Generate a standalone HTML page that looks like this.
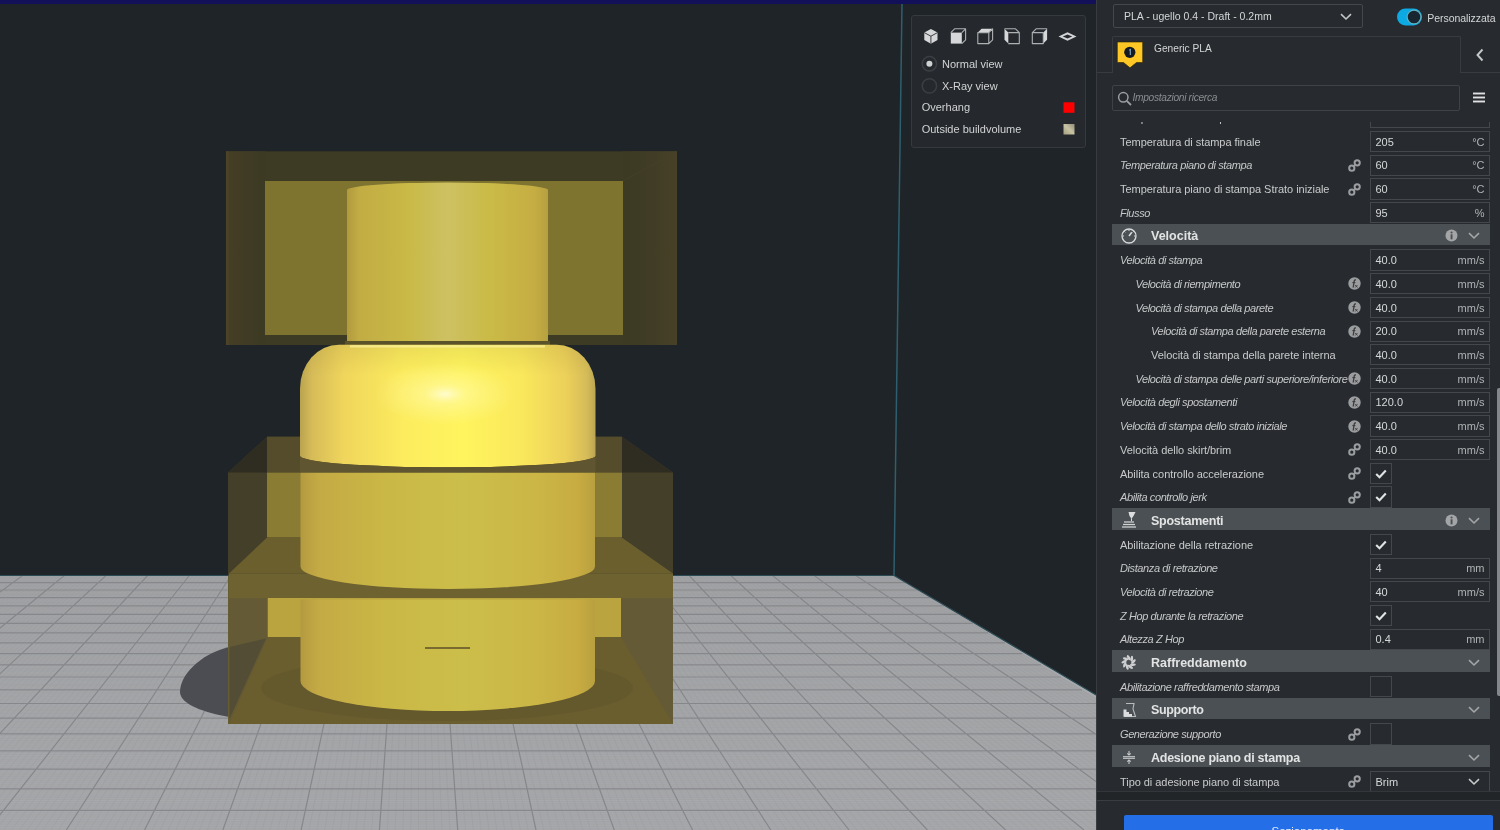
<!DOCTYPE html>
<html><head><meta charset="utf-8">
<style>
html,body{margin:0;padding:0;width:1500px;height:830px;overflow:hidden;background:#1f2327;font-family:"Liberation Sans",sans-serif;}
#wrap{position:absolute;left:0;top:0;width:1500px;height:830px;will-change:transform}

#panel{position:absolute;left:1096px;top:0;width:404px;height:830px;background:#272b2f;}
#pborder{position:absolute;left:1096px;top:0;width:1px;height:830px;background:#383c40}
.abs{position:absolute}
.lbl{position:absolute;height:24px;line-height:24px;font-size:11px;color:#c9cacb;white-space:nowrap;letter-spacing:-0.05px}
.lbl.it{font-style:italic;letter-spacing:-0.4px;color:#c6c7c8}
.inp{position:absolute;left:1370px;width:119.8px;height:21.3px;box-sizing:border-box;border:1px solid #44484c;background:#272b2f}
.chk{position:absolute;left:1370px;width:21.5px;height:21.3px;box-sizing:border-box;border:1px solid #44484c;background:#272b2f}
.val{position:absolute;left:1375.5px;height:24px;line-height:24px;font-size:11px;color:#d6d7d8;white-space:nowrap}
.unit{position:absolute;right:15.5px;height:24px;line-height:24px;font-size:11px;color:#b0b2b4;white-space:nowrap}
.cat{position:absolute;left:1112px;width:378px;height:21.6px;background:#4b5054}
.cattxt{position:absolute;left:1151px;height:24px;line-height:24px;font-size:12.5px;font-weight:bold;color:#e2e3e3;white-space:nowrap;letter-spacing:0px}
#list{position:absolute;left:0;top:0;width:1500px;height:830px;clip-path:polygon(1097px 122px,1500px 122px,1500px 791px,1097px 791px)}


.ovt{position:absolute;height:24px;line-height:24px;font-size:11px;color:#d2d3d4;white-space:nowrap}

</style></head><body><div id="wrap">

<svg width="1097" height="830" viewBox="0 0 1097 830" style="position:absolute;left:0;top:0">
<rect width="1097" height="830" fill="#1e2427"/>
<rect width="1097" height="4" fill="#13105a"/>
<polygon points="0,575.5 894,575.5 1097,695.5 1097,830 0,830" fill="#a8a9ac"/>
<clipPath id="floorClip"><polygon points="0,575.5 894,575.5 1097,695.5 1097,830 0,830"/></clipPath>
<g clip-path="url(#floorClip)">
<path d="M-473.08 575.5L-1256.70 830M-468.92 575.5L-1248.87 830M-464.75 575.5L-1241.04 830M-460.59 575.5L-1233.22 830M-456.42 575.5L-1225.39 830M-452.25 575.5L-1217.56 830M-448.09 575.5L-1209.73 830M-443.92 575.5L-1201.90 830M-439.76 575.5L-1194.07 830M-431.42 575.5L-1178.42 830M-427.26 575.5L-1170.59 830M-423.09 575.5L-1162.76 830M-418.93 575.5L-1154.93 830M-414.76 575.5L-1147.10 830M-410.59 575.5L-1139.28 830M-406.43 575.5L-1131.45 830M-402.26 575.5L-1123.62 830M-398.10 575.5L-1115.79 830M-389.76 575.5L-1100.13 830M-385.60 575.5L-1092.31 830M-381.43 575.5L-1084.48 830M-377.27 575.5L-1076.65 830M-373.10 575.5L-1068.82 830M-368.93 575.5L-1060.99 830M-364.77 575.5L-1053.16 830M-360.60 575.5L-1045.34 830M-356.44 575.5L-1037.51 830M-348.10 575.5L-1021.85 830M-343.94 575.5L-1014.02 830M-339.77 575.5L-1006.19 830M-335.61 575.5L-998.37 830M-331.44 575.5L-990.54 830M-327.27 575.5L-982.71 830M-323.11 575.5L-974.88 830M-318.94 575.5L-967.05 830M-314.78 575.5L-959.22 830M-306.44 575.5L-943.57 830M-302.28 575.5L-935.74 830M-298.11 575.5L-927.91 830M-293.95 575.5L-920.08 830M-289.78 575.5L-912.25 830M-285.61 575.5L-904.43 830M-281.45 575.5L-896.60 830M-277.28 575.5L-888.77 830M-273.12 575.5L-880.94 830M-264.78 575.5L-865.28 830M-260.62 575.5L-857.46 830M-256.45 575.5L-849.63 830M-252.29 575.5L-841.80 830M-248.12 575.5L-833.97 830M-243.95 575.5L-826.14 830M-239.79 575.5L-818.31 830M-235.62 575.5L-810.49 830M-231.46 575.5L-802.66 830M-223.12 575.5L-787.00 830M-218.96 575.5L-779.17 830M-214.79 575.5L-771.34 830M-210.63 575.5L-763.52 830M-206.46 575.5L-755.69 830M-202.29 575.5L-747.86 830M-198.13 575.5L-740.03 830M-193.96 575.5L-732.20 830M-189.80 575.5L-724.37 830M-181.46 575.5L-708.72 830M-177.30 575.5L-700.89 830M-173.13 575.5L-693.06 830M-168.97 575.5L-685.23 830M-164.80 575.5L-677.40 830M-160.63 575.5L-669.58 830M-156.47 575.5L-661.75 830M-152.30 575.5L-653.92 830M-148.14 575.5L-646.09 830M-139.80 575.5L-630.43 830M-135.64 575.5L-622.61 830M-131.47 575.5L-614.78 830M-127.31 575.5L-606.95 830M-123.14 575.5L-599.12 830M-118.97 575.5L-591.29 830M-114.81 575.5L-583.46 830M-110.64 575.5L-575.64 830M-106.48 575.5L-567.81 830M-98.14 575.5L-552.15 830M-93.98 575.5L-544.32 830M-89.81 575.5L-536.49 830M-85.65 575.5L-528.67 830M-81.48 575.5L-520.84 830M-77.31 575.5L-513.01 830M-73.15 575.5L-505.18 830M-68.98 575.5L-497.35 830M-64.82 575.5L-489.52 830M-56.48 575.5L-473.87 830M-52.32 575.5L-466.04 830M-48.15 575.5L-458.21 830M-43.99 575.5L-450.38 830M-39.82 575.5L-442.55 830M-35.65 575.5L-434.73 830M-31.49 575.5L-426.90 830M-27.32 575.5L-419.07 830M-23.16 575.5L-411.24 830M-14.82 575.5L-395.58 830M-10.66 575.5L-387.76 830M-6.49 575.5L-379.93 830M-2.33 575.5L-372.10 830M1.84 575.5L-364.27 830M6.01 575.5L-356.44 830M10.17 575.5L-348.61 830M14.34 575.5L-340.79 830M18.50 575.5L-332.96 830M26.84 575.5L-317.30 830M31.00 575.5L-309.47 830M35.17 575.5L-301.64 830M39.33 575.5L-293.82 830M43.50 575.5L-285.99 830M47.67 575.5L-278.16 830M51.83 575.5L-270.33 830M56.00 575.5L-262.50 830M60.16 575.5L-254.67 830M68.50 575.5L-239.02 830M72.66 575.5L-231.19 830M76.83 575.5L-223.36 830M80.99 575.5L-215.53 830M85.16 575.5L-207.70 830M89.33 575.5L-199.88 830M93.49 575.5L-192.05 830M97.66 575.5L-184.22 830M101.82 575.5L-176.39 830M110.16 575.5L-160.73 830M114.32 575.5L-152.91 830M118.49 575.5L-145.08 830M122.65 575.5L-137.25 830M126.82 575.5L-129.42 830M130.99 575.5L-121.59 830M135.15 575.5L-113.76 830M139.32 575.5L-105.94 830M143.48 575.5L-98.11 830M151.82 575.5L-82.45 830M155.98 575.5L-74.62 830M160.15 575.5L-66.79 830M164.31 575.5L-58.97 830M168.48 575.5L-51.14 830M172.65 575.5L-43.31 830M176.81 575.5L-35.48 830M180.98 575.5L-27.65 830M185.14 575.5L-19.82 830M193.48 575.5L-4.17 830M197.64 575.5L3.66 830M201.81 575.5L11.49 830M205.97 575.5L19.32 830M210.14 575.5L27.15 830M214.31 575.5L34.97 830M218.47 575.5L42.80 830M222.64 575.5L50.63 830M226.80 575.5L58.46 830M235.14 575.5L74.12 830M239.30 575.5L81.94 830M243.47 575.5L89.77 830M247.63 575.5L97.60 830M251.80 575.5L105.43 830M255.97 575.5L113.26 830M260.13 575.5L121.09 830M264.30 575.5L128.91 830M268.46 575.5L136.74 830M276.80 575.5L152.40 830M280.96 575.5L160.23 830M285.13 575.5L168.06 830M289.29 575.5L175.88 830M293.46 575.5L183.71 830M297.63 575.5L191.54 830M301.79 575.5L199.37 830M305.96 575.5L207.20 830M310.12 575.5L215.03 830M318.46 575.5L230.68 830M322.62 575.5L238.51 830M326.79 575.5L246.34 830M330.95 575.5L254.17 830M335.12 575.5L262.00 830M339.29 575.5L269.82 830M343.45 575.5L277.65 830M347.62 575.5L285.48 830M351.78 575.5L293.31 830M360.12 575.5L308.97 830M364.28 575.5L316.79 830M368.45 575.5L324.62 830M372.61 575.5L332.45 830M376.78 575.5L340.28 830M380.95 575.5L348.11 830M385.11 575.5L355.94 830M389.28 575.5L363.76 830M393.44 575.5L371.59 830M401.78 575.5L387.25 830M405.94 575.5L395.08 830M410.11 575.5L402.91 830M414.27 575.5L410.73 830M418.44 575.5L418.56 830M422.61 575.5L426.39 830M426.77 575.5L434.22 830M430.94 575.5L442.05 830M435.10 575.5L449.88 830M443.44 575.5L465.53 830M447.60 575.5L473.36 830M451.77 575.5L481.19 830M455.93 575.5L489.02 830M460.10 575.5L496.85 830M464.27 575.5L504.67 830M468.43 575.5L512.50 830M472.60 575.5L520.33 830M476.76 575.5L528.16 830M485.10 575.5L543.82 830M489.26 575.5L551.64 830M493.43 575.5L559.47 830M497.59 575.5L567.30 830M501.76 575.5L575.13 830M505.93 575.5L582.96 830M510.09 575.5L590.79 830M514.26 575.5L598.61 830M518.42 575.5L606.44 830M526.76 575.5L622.10 830M530.92 575.5L629.93 830M535.09 575.5L637.76 830M539.25 575.5L645.58 830M543.42 575.5L653.41 830M547.59 575.5L661.24 830M551.75 575.5L669.07 830M555.92 575.5L676.90 830M560.08 575.5L684.73 830M568.42 575.5L700.38 830M572.58 575.5L708.21 830M576.75 575.5L716.04 830M580.91 575.5L723.87 830M585.08 575.5L731.70 830M589.25 575.5L739.52 830M593.41 575.5L747.35 830M597.58 575.5L755.18 830M601.74 575.5L763.01 830M610.08 575.5L778.67 830M614.24 575.5L786.49 830M618.41 575.5L794.32 830M622.57 575.5L802.15 830M626.74 575.5L809.98 830M630.91 575.5L817.81 830M635.07 575.5L825.64 830M639.24 575.5L833.47 830M643.40 575.5L841.29 830M651.74 575.5L856.95 830M655.90 575.5L864.78 830M660.07 575.5L872.61 830M664.23 575.5L880.44 830M668.40 575.5L888.26 830M672.57 575.5L896.09 830M676.73 575.5L903.92 830M680.90 575.5L911.75 830M685.06 575.5L919.58 830M693.40 575.5L935.23 830M697.56 575.5L943.06 830M701.73 575.5L950.89 830M705.89 575.5L958.72 830M710.06 575.5L966.55 830M714.23 575.5L974.38 830M718.39 575.5L982.20 830M722.56 575.5L990.03 830M726.72 575.5L997.86 830M735.06 575.5L1013.52 830M739.22 575.5L1021.35 830M743.39 575.5L1029.17 830M747.55 575.5L1037.00 830M751.72 575.5L1044.83 830M755.89 575.5L1052.66 830M760.05 575.5L1060.49 830M764.22 575.5L1068.32 830M768.38 575.5L1076.14 830M776.72 575.5L1091.80 830M780.88 575.5L1099.63 830M785.05 575.5L1107.46 830M789.21 575.5L1115.29 830M793.38 575.5L1123.11 830M797.55 575.5L1130.94 830M801.71 575.5L1138.77 830M805.88 575.5L1146.60 830M810.04 575.5L1154.43 830M818.38 575.5L1170.08 830M822.54 575.5L1177.91 830M826.71 575.5L1185.74 830M830.87 575.5L1193.57 830M835.04 575.5L1201.40 830M839.21 575.5L1209.23 830M843.37 575.5L1217.05 830M847.54 575.5L1224.88 830M851.70 575.5L1232.71 830M860.04 575.5L1248.37 830M864.20 575.5L1256.20 830M868.37 575.5L1264.02 830M872.53 575.5L1271.85 830M876.70 575.5L1279.68 830M880.87 575.5L1287.51 830M885.03 575.5L1295.34 830M889.20 575.5L1303.17 830M893.36 575.5L1310.99 830M0 569.67H884.43M0 570.33H885.50M0 570.99H886.59M0 571.65H887.67M0 572.32H888.77M0 572.98H889.87M0 573.65H890.97M0 574.33H892.08M0 575.01H893.19M0 576.37H895.43M0 577.06H896.56M0 577.75H897.69M0 578.44H898.83M0 579.14H899.98M0 579.84H901.13M0 580.54H902.29M0 581.25H903.45M0 581.96H904.62M0 583.39H906.97M0 584.11H908.15M0 584.84H909.34M0 585.56H910.54M0 586.30H911.74M0 587.03H912.95M0 587.77H914.16M0 588.51H915.38M0 589.26H916.61M0 590.76H919.07M0 591.52H920.32M0 592.28H921.57M0 593.04H922.83M0 593.81H924.09M0 594.58H925.36M0 595.36H926.63M0 596.14H927.91M0 596.92H929.20M0 598.50H931.80M0 599.30H933.11M0 600.10H934.42M0 600.90H935.74M0 601.71H937.07M0 602.52H938.40M0 603.34H939.75M0 604.16H941.10M0 604.99H942.45M0 606.65H945.18M0 607.49H946.56M0 608.33H947.95M0 609.18H949.34M0 610.03H950.74M0 610.88H952.14M0 611.74H953.56M0 612.61H954.98M0 613.48H956.41M0 615.23H959.29M0 616.12H960.74M0 617.00H962.20M0 617.90H963.67M0 618.80H965.14M0 619.70H966.63M0 620.61H968.12M0 621.52H969.62M0 622.44H971.12M0 624.29H974.17M0 625.22H975.70M0 626.16H977.24M0 627.10H978.79M0 628.05H980.35M0 629.00H981.92M0 629.96H983.49M0 630.93H985.08M0 631.90H986.67M0 633.85H989.89M0 634.84H991.51M0 635.83H993.14M0 636.83H994.78M0 637.83H996.43M0 638.84H998.08M0 639.86H999.75M0 640.88H1001.43M0 641.91H1003.12M0 643.98H1006.52M0 645.02H1008.24M0 646.07H1009.96M0 647.13H1011.70M0 648.19H1013.45M0 649.26H1015.21M0 650.34H1016.98M0 651.42H1018.75M0 652.51H1020.54M0 654.71H1024.15M0 655.82H1025.98M0 656.93H1027.81M0 658.05H1029.65M0 659.18H1031.51M0 660.32H1033.37M0 661.46H1035.25M0 662.61H1037.14M0 663.77H1039.04M0 666.10H1042.88M0 667.28H1044.81M0 668.47H1046.76M0 669.66H1048.72M0 670.86H1050.69M0 672.07H1052.68M0 673.28H1054.68M0 674.51H1056.69M0 675.74H1058.71M0 678.22H1062.79M0 679.48H1064.85M0 680.74H1066.93M0 682.01H1069.02M0 683.29H1071.12M0 684.58H1073.23M0 685.87H1075.36M0 687.18H1077.51M0 688.49H1079.66M0 691.14H1084.02M0 692.48H1086.22M0 693.83H1088.44M0 695.19H1090.66M0 696.55H1092.91M0 697.93H1095.17M0 699.31H1097.00M0 700.70H1097.00M0 702.11H1097.00M0 704.94H1097.00M0 706.37H1097.00M0 707.81H1097.00M0 709.27H1097.00M0 710.73H1097.00M0 712.20H1097.00M0 713.68H1097.00M0 715.17H1097.00M0 716.68H1097.00M0 719.71H1097.00M0 721.25H1097.00M0 722.79H1097.00M0 724.35H1097.00M0 725.92H1097.00M0 727.50H1097.00M0 729.09H1097.00M0 730.69H1097.00M0 732.30H1097.00M0 735.57H1097.00M0 737.21H1097.00M0 738.88H1097.00M0 740.55H1097.00M0 742.24H1097.00M0 743.93H1097.00M0 745.65H1097.00M0 747.37H1097.00M0 749.11H1097.00M0 752.62H1097.00M0 754.40H1097.00M0 756.19H1097.00M0 757.99H1097.00M0 759.81H1097.00M0 761.64H1097.00M0 763.49H1097.00M0 765.35H1097.00M0 767.23H1097.00M0 771.02H1097.00M0 772.94H1097.00M0 774.88H1097.00M0 776.83H1097.00M0 778.79H1097.00M0 780.78H1097.00M0 782.77H1097.00M0 784.79H1097.00M0 786.82H1097.00M0 790.93H1097.00M0 793.01H1097.00M0 795.11H1097.00M0 797.23H1097.00M0 799.36H1097.00M0 801.51H1097.00M0 803.68H1097.00M0 805.87H1097.00M0 808.08H1097.00M0 812.55H1097.00M0 814.81H1097.00M0 817.09H1097.00M0 819.40H1097.00M0 821.72H1097.00M0 824.06H1097.00M0 826.43H1097.00M0 828.81H1097.00" stroke="#9b9c9f" stroke-width="0.5" fill="none"/>
<path d="M0 582.67H905.79M0 590.01H917.84M0 597.71H930.50M0 605.82H943.81M0 614.35H957.84M0 623.36H972.64M0 632.87H988.27M0 642.94H1004.81M0 653.61H1022.34M0 664.93H1040.95M0 676.98H1060.74M0 689.81H1081.83M0 703.52H1097.00M0 718.19H1097.00M0 733.93H1097.00M0 750.86H1097.00M0 769.12H1097.00M0 788.87H1097.00M0 810.30H1097.00M-477.25 575.5L-1264.53 830M-435.59 575.5L-1186.25 830M-393.93 575.5L-1107.96 830M-352.27 575.5L-1029.68 830M-310.61 575.5L-951.40 830M-268.95 575.5L-873.11 830M-227.29 575.5L-794.83 830M-185.63 575.5L-716.55 830M-143.97 575.5L-638.26 830M-102.31 575.5L-559.98 830M-60.65 575.5L-481.70 830M-18.99 575.5L-403.41 830M22.67 575.5L-325.13 830M64.33 575.5L-246.85 830M105.99 575.5L-168.56 830M147.65 575.5L-90.28 830M189.31 575.5L-12.00 830M230.97 575.5L66.29 830M272.63 575.5L144.57 830M314.29 575.5L222.85 830M355.95 575.5L301.14 830M397.61 575.5L379.42 830M439.27 575.5L457.70 830M480.93 575.5L535.99 830M522.59 575.5L614.27 830M564.25 575.5L692.55 830M605.91 575.5L770.84 830M647.57 575.5L849.12 830M689.23 575.5L927.41 830M730.89 575.5L1005.69 830M772.55 575.5L1083.97 830M814.21 575.5L1162.26 830M855.87 575.5L1240.54 830" stroke="#86878a" stroke-width="1.2" fill="none"/>
</g>
<line x1="902" y1="4" x2="894" y2="575.5" stroke="#2f5f6e" stroke-width="1.5"/>
<line x1="0" y1="575.5" x2="894" y2="575.5" stroke="#2c4a54" stroke-width="1.2"/>
<line x1="894" y1="575.5" x2="1097" y2="695.5" stroke="#2c4a54" stroke-width="1.2"/>

<defs>
 <linearGradient id="gTop" x1="0" x2="1" y1="0" y2="0">
  <stop offset="0" stop-color="#b09a3e"/>
  <stop offset="0.06" stop-color="#c2ac44"/>
  <stop offset="0.3" stop-color="#c9b946"/>
  <stop offset="0.5" stop-color="#cdc163"/>
  <stop offset="0.7" stop-color="#cabb47"/>
  <stop offset="0.93" stop-color="#c6ad43"/>
  <stop offset="1" stop-color="#b6a040"/>
 </linearGradient>
 <linearGradient id="gCap" x1="0" x2="1" y1="0" y2="0">
  <stop offset="0" stop-color="#b9a350"/>
  <stop offset="0.04" stop-color="#d6bb58"/>
  <stop offset="0.15" stop-color="#f0d65c"/>
  <stop offset="0.35" stop-color="#fcec5e"/>
  <stop offset="0.55" stop-color="#fff45e"/>
  <stop offset="0.75" stop-color="#fae85c"/>
  <stop offset="0.9" stop-color="#ecd05a"/>
  <stop offset="0.97" stop-color="#d6bc58"/>
  <stop offset="1" stop-color="#bba552"/>
 </linearGradient>
 <radialGradient id="gHi" gradientUnits="userSpaceOnUse" cx="445" cy="394" r="70" gradientTransform="translate(445 394) scale(1 0.45) translate(-445 -394)">
  <stop offset="0" stop-color="#fffde0" stop-opacity="0.85"/>
  <stop offset="0.3" stop-color="#fffbb0" stop-opacity="0.5"/>
  <stop offset="1" stop-color="#fff8a0" stop-opacity="0"/>
 </radialGradient>
 <linearGradient id="gCapV" x1="0" x2="0" y1="0" y2="1">
  <stop offset="0" stop-color="#6a5a20" stop-opacity="0.12"/>
  <stop offset="0.25" stop-color="#6a5a20" stop-opacity="0"/>
  <stop offset="1" stop-color="#6a5a20" stop-opacity="0"/>
 </linearGradient>
 <linearGradient id="gMid" x1="0" x2="1" y1="0" y2="0">
  <stop offset="0" stop-color="#b49a40"/>
  <stop offset="0.06" stop-color="#c4aa44"/>
  <stop offset="0.3" stop-color="#cab846"/>
  <stop offset="0.55" stop-color="#ccbe4a"/>
  <stop offset="0.8" stop-color="#cbb646"/>
  <stop offset="0.94" stop-color="#c8ac42"/>
  <stop offset="1" stop-color="#b9a03f"/>
 </linearGradient>
 <linearGradient id="gLeftFrame" x1="0" x2="1" y1="0" y2="0">
  <stop offset="0" stop-color="#4a4428"/>
  <stop offset="0.3" stop-color="#3f3a24"/>
  <stop offset="1" stop-color="#3c3a23"/>
 </linearGradient>
 <linearGradient id="gLF" x1="0" x2="1" y1="0" y2="0"><stop offset="0" stop-color="#463f26"/><stop offset="0.5" stop-color="#403b24"/><stop offset="1" stop-color="#3c3a23"/></linearGradient>
 <linearGradient id="gRF" x1="0" x2="1" y1="0" y2="0"><stop offset="0" stop-color="#3c3a23"/><stop offset="0.5" stop-color="#403c25"/><stop offset="1" stop-color="#474127"/></linearGradient>
 <clipPath id="floorArea"><polygon points="0,575.5 894,575.5 1097,699 1097,830 0,830"/></clipPath>
</defs>
<!-- shadow -->
<path d="M232,646.5 C206,651 180,672 180,692 C180,704 204,713 232,717.5 Z" fill="#4b4d52"/>

<!-- UPPER BOX -->
<rect x="226" y="151.3" width="451" height="193.7" fill="#3d3b24"/>
<rect x="226" y="151.3" width="39" height="193.7" fill="url(#gLF)"/>
<rect x="623" y="151.3" width="54" height="193.7" fill="url(#gRF)"/>
<line x1="677" y1="151.3" x2="623" y2="181" stroke="#48432a" stroke-width="1" opacity="0.6"/>
<rect x="265" y="181" width="358" height="154" fill="#7e7430"/>
<rect x="226" y="151.3" width="2.5" height="193.7" fill="#4d4629" opacity="0.8"/>

<!-- upper cylinder -->
<path d="M347,190 A100.5,7.5 0 0 1 548,190 L548,341.5 L347,341.5 Z" fill="url(#gTop)"/>
<rect x="345" y="341" width="205" height="4" fill="#5a5228"/>

<!-- LOWER BOX: regions over background -->
<!-- top face + sides above floor -->
<polygon points="267,436.7 622,436.7 673,472.6 673,575.5 228,575.5 228,472.6" fill="#443f29"/>
<polygon points="267,436.7 228,472.6 267,472.6" fill="#2f2d22"/>
<polygon points="622,436.7 673,472.6 622,472.6" fill="#2f2d22"/>
<rect x="267" y="436.7" width="355" height="35.9" fill="#544c2a"/>
<!-- front face over floor -->
<rect x="228" y="575.5" width="445" height="148.5" fill="#675d32"/>
<!-- back face inner (above slab) -->
<rect x="267" y="472.6" width="355" height="64.4" fill="#8a7c33"/>
<!-- slab -->
<polygon points="267.6,537 621,537 673,573.5 229,573.5" fill="#6b5f2e"/>
<rect x="229" y="573.5" width="444" height="25" fill="#6d6230"/>
<!-- bright back face region below slab -->
<rect x="267.6" y="598" width="353.4" height="39" fill="#b9a43f"/>
<!-- floor inside box -->
<polygon points="267.6,637 621,637 673,724 229,724" fill="#6a5e2f"/>
<ellipse cx="447" cy="688" rx="186" ry="33" fill="#5c532b" opacity="0.4"/>
<!-- left/right face over floor -->
<polygon points="229,598 267.6,598 267.6,637 229,724" fill="#62583a" opacity="0.55"/>
<polygon points="673,598 621,598 621,637 673,724" fill="#62583a" opacity="0.55"/>
<polygon points="229.5,647 266,638.5 229.5,719" fill="#4e4a36" opacity="0.75"/>

<!-- CAP -->
<path d="M339,344.7 L556.5,344.7 A39,44 0 0 1 595.5,388.7 L595.5,455.8 A147.75,11.5 0 0 1 300,455.8 L300,388.7 A39,44 0 0 1 339,344.7 Z" fill="url(#gCap)"/>
<path d="M339,344.7 L556.5,344.7 A39,44 0 0 1 595.5,388.7 L595.5,455.8 A147.75,11.5 0 0 1 300,455.8 L300,388.7 A39,44 0 0 1 339,344.7 Z" fill="url(#gCapV)"/>
<path d="M339,344.7 L556.5,344.7 A39,44 0 0 1 595.5,388.7 L595.5,455.8 A147.75,11.5 0 0 1 300,455.8 L300,388.7 A39,44 0 0 1 339,344.7 Z" fill="url(#gHi)"/>
<rect x="350" y="345.2" width="195" height="2.3" fill="#fbf29a" opacity="0.75"/>

<!-- mid cylinder -->
<path d="M300.5,472.6 L595,472.6 L595,566.5 A147.25,22.5 0 0 1 300.5,566.5 Z" fill="url(#gMid)"/>
<path d="M300,455.8 A147.75,11.5 0 0 0 595.5,455.8 L595.5,472.6 L300,472.6 Z" fill="#5f5530"/>
<!-- lower cylinder -->
<path d="M300.5,599.5 L595,599.5 L595,681 A147.25,30 0 0 1 300.5,681 Z" fill="url(#gMid)"/>
<rect x="425" y="647" width="45" height="2" fill="#7a6a30"/>

</svg>


<div class="abs" style="left:911px;top:15px;width:174.5px;height:132.5px;box-sizing:border-box;background:#25292d;border:1px solid #363a3e;border-radius:3px"></div>
<svg width="1500" height="830" style="position:absolute;left:0;top:0">
<g transform="translate(930.9 36.2)"><path d="M0,-7.3 L6.6,-3.6 L6.6,3.8 L0,7.5 L-6.6,3.8 L-6.6,-3.6 Z" fill="#d6d7d8"/><path d="M-6.6,-3.6 L0,0 L6.6,-3.6 M0,0 L0,7.5" fill="none" stroke="#2a2e32" stroke-width="0.9"/></g><rect x="950.8" y="32.6" width="11.0" height="11.0" fill="#d6d7d8"/><path d="M950.8,32.6 L954.5999999999999,28.8 L965.5999999999999,28.8 L965.5999999999999,39.800000000000004 L961.8,43.6 M961.8,32.6 L965.5999999999999,28.8" fill="none" stroke="#aeb0b2" stroke-width="1.1" stroke-linejoin="round"/><path d="M977.8,32.6 L981.5999999999999,28.8 L992.5999999999999,28.8 L988.8,32.6 Z" fill="#d6d7d8"/><path d="M977.8,32.6 L988.8,32.6 L988.8,43.6 L977.8,43.6 Z M988.8,32.6 L992.5999999999999,28.8 L992.5999999999999,39.800000000000004 L988.8,43.6" fill="none" stroke="#aeb0b2" stroke-width="1.1" stroke-linejoin="round"/><path d="M1004.5,28.8 L1008.3,32.6 L1008.3,43.6 L1004.5,39.800000000000004 Z" fill="#d6d7d8"/><path d="M1004.5,28.8 L1015.5,28.8 L1019.3,32.6 L1019.3,43.6 L1008.3,43.6 M1008.3,32.6 L1019.3,32.6" fill="none" stroke="#aeb0b2" stroke-width="1.1" stroke-linejoin="round"/><path d="M1043.3,32.6 L1047.1,28.8 L1047.1,39.800000000000004 L1043.3,43.6 Z" fill="#d6d7d8"/><path d="M1032.3,32.6 L1043.3,32.6 L1043.3,43.6 L1032.3,43.6 Z M1032.3,32.6 L1036.1,28.8 L1047.1,28.8" fill="none" stroke="#aeb0b2" stroke-width="1.1" stroke-linejoin="round"/>
<path d="M1058.5,36.5 L1067.5,32.3 L1076.5,36.5 L1067.5,40.7 Z M1062.8,36.5 L1067.5,34.4 L1072.2,36.5 L1067.5,38.6 Z" fill="#d3d4d5" fill-rule="evenodd"/>
<circle cx="929.4" cy="63.8" r="7.2" fill="#25292d" stroke="#3b3f43" stroke-width="1.5"/>
<circle cx="929.4" cy="63.8" r="3" fill="#d0d1d2"/>
<circle cx="929.4" cy="85.9" r="7.2" fill="#25292d" stroke="#3b3f43" stroke-width="1.5"/>
<rect x="1063.5" y="102.3" width="11" height="10.5" fill="#ff0000"/>
<defs><linearGradient id="obv" x1="0" y1="1" x2="1" y2="0"><stop offset="0" stop-color="#a7a080"/><stop offset="0.5" stop-color="#c8c3a3"/><stop offset="1" stop-color="#8f8c79"/></linearGradient></defs>
<rect x="1063.5" y="124" width="11" height="10.5" fill="url(#obv)"/>
</svg>
<div class="ovt" style="left:942px;top:52px">Normal view</div>
<div class="ovt" style="left:942px;top:74px">X-Ray view</div>
<div class="ovt" style="left:921.7px;top:95px">Overhang</div>
<div class="ovt" style="left:921.7px;top:117px">Outside buildvolume</div>


<div id="panel"></div>
<div id="pborder"></div>
<!-- top dropdown -->
<div class="abs" style="left:1113px;top:3.5px;width:249.5px;height:24.5px;box-sizing:border-box;border:1px solid #44484c;border-radius:2px"></div>
<div class="abs" style="left:1124px;top:3.5px;height:24px;line-height:24px;font-size:10.5px;color:#d4d5d6;white-space:nowrap">PLA - ugello 0.4 - Draft - 0.2mm</div>
<svg width="12" height="8" viewBox="0 0 12 8" style="position:absolute;left:1340px;top:12.5px"><path d="M1,1.2 L6,6 L11,1.2" fill="none" stroke="#c4c5c7" stroke-width="1.6"/></svg>
<!-- toggle -->
<svg width="28" height="20" viewBox="0 0 28 20" style="position:absolute;left:1396px;top:7px"><rect x="1" y="1.6" width="25" height="16.8" rx="8.4" fill="#0ca9e3"/><circle cx="18" cy="10" r="6.9" fill="#172630" stroke="#5fb3c6" stroke-width="1.2"/></svg>
<div class="abs" style="left:1427.3px;top:6px;height:24px;line-height:24px;font-size:10.5px;color:#d4d5d6;white-space:nowrap;letter-spacing:-0.05px">Personalizzata</div>
<!-- tab -->
<div class="abs" style="left:1112.4px;top:36.3px;width:349px;height:37px;box-sizing:border-box;border:1px solid #383c40;border-bottom:none;border-radius:2px 2px 0 0"></div>
<div class="abs" style="left:1097px;top:72px;width:15.4px;height:1px;background:#383c40"></div>
<div class="abs" style="left:1461px;top:72px;width:39px;height:1px;background:#383c40"></div>
<svg width="28" height="28" viewBox="0 0 28 28" style="position:absolute;left:1116px;top:40.5px"><path d="M1.3,1 L26.7,1 L26.7,21.5 L20.5,21.5 L14,26.8 L7.5,21.5 L1.3,21.5 Z" fill="#fdc725" stroke="#2a2200" stroke-width="0.6" stroke-linejoin="round"/><circle cx="13.8" cy="11.3" r="5.6" fill="#141a22"/><path d="M13.2,9.2 L14.3,8.5 L14.3,14" fill="none" stroke="#7fa9c9" stroke-width="1.1"/></svg>
<div class="abs" style="left:1154px;top:37px;height:24px;line-height:24px;font-size:10.2px;color:#d4d5d6;white-space:nowrap">Generic PLA</div>
<svg width="10" height="14" viewBox="0 0 10 14" style="position:absolute;left:1474.5px;top:48px"><path d="M7.5,1.5 L2.5,7 L7.5,12.5" fill="none" stroke="#c6c7c9" stroke-width="1.9"/></svg>
<!-- search -->
<div class="abs" style="left:1112.3px;top:84.5px;width:347.5px;height:26px;box-sizing:border-box;border:1px solid #3f4347;border-radius:2px"></div>
<svg width="16" height="16" viewBox="0 0 16 16" style="position:absolute;left:1117px;top:90.5px"><circle cx="6.3" cy="6.3" r="4.7" fill="none" stroke="#9c9ea1" stroke-width="1.5"/><line x1="9.8" y1="9.8" x2="14" y2="14" stroke="#9c9ea1" stroke-width="1.8"/></svg>
<div class="abs" style="left:1132.5px;top:86px;height:24px;line-height:24px;font-size:10.2px;font-style:italic;color:#8a8d90;white-space:nowrap;letter-spacing:-0.3px">Impostazioni ricerca</div>
<svg width="14" height="12" viewBox="0 0 14 12" style="position:absolute;left:1471.5px;top:92px"><g stroke="#dfe0e1" stroke-width="1.9"><line x1="1" y1="1.5" x2="13" y2="1.5"/><line x1="1" y1="5.5" x2="13" y2="5.5"/><line x1="1" y1="9.5" x2="13" y2="9.5"/></g></svg>
<div id="list">

<div class="inp" style="top:107.2px"></div>
<div class="lbl" style="left:1120px;top:106.0px">Temperatura di stampa Strato iniziale</div>

<div class="lbl" style="left:1120.0px;top:129.7px">Temperatura di stampa finale</div>
<div class="inp" style="top:130.9px"></div>
<div class="val" style="top:129.7px">205</div>
<div class="unit" style="top:129.7px">°C</div>
<div class="lbl it" style="left:1120.0px;top:153.4px">Temperatura piano di stampa</div>
<svg width="13" height="13" viewBox="0 0 13 13" style="position:absolute;left:1347.5px;top:158.9px"><g fill="none" stroke="#9b9da0" stroke-width="2"><circle cx="3.8" cy="9.2" r="2.6"/><circle cx="9.2" cy="3.8" r="2.6"/></g><line x1="5.5" y1="7.5" x2="7.5" y2="5.5" stroke="#9b9da0" stroke-width="1.6"/></svg>
<div class="inp" style="top:154.6px"></div>
<div class="val" style="top:153.4px">60</div>
<div class="unit" style="top:153.4px">°C</div>
<div class="lbl" style="left:1120.0px;top:177.1px">Temperatura piano di stampa Strato iniziale</div>
<svg width="13" height="13" viewBox="0 0 13 13" style="position:absolute;left:1347.5px;top:182.6px"><g fill="none" stroke="#9b9da0" stroke-width="2"><circle cx="3.8" cy="9.2" r="2.6"/><circle cx="9.2" cy="3.8" r="2.6"/></g><line x1="5.5" y1="7.5" x2="7.5" y2="5.5" stroke="#9b9da0" stroke-width="1.6"/></svg>
<div class="inp" style="top:178.3px"></div>
<div class="val" style="top:177.1px">60</div>
<div class="unit" style="top:177.1px">°C</div>
<div class="lbl it" style="left:1120.0px;top:200.8px">Flusso</div>
<div class="inp" style="top:202.0px"></div>
<div class="val" style="top:200.8px">95</div>
<div class="unit" style="top:200.8px">%</div>
<div class="cat" style="top:223.7px"></div>
<svg width="18" height="18" viewBox="0 0 18 18" style="position:absolute;left:1120px;top:226.7px"><circle cx="9" cy="9" r="7" fill="none" stroke="#d8d9da" stroke-width="1.3"/><path d="M9,9 L11.8,5.2" stroke="#d8d9da" stroke-width="1.6"/><g stroke="#d8d9da" stroke-width="1"><line x1="9" y1="2.5" x2="9" y2="4"/><line x1="4.3" y1="4.3" x2="5.3" y2="5.3"/><line x1="13.7" y1="4.3" x2="12.7" y2="5.3"/><line x1="2.5" y1="9" x2="4" y2="9"/><line x1="15.5" y1="9" x2="14" y2="9"/></g></svg>
<div class="cattxt" style="top:224.2px;letter-spacing:0px">Velocità</div>
<svg width="13" height="13" viewBox="0 0 13 13" style="position:absolute;left:1444.5px;top:229.2px"><circle cx="6.5" cy="6.5" r="6" fill="#a3a5a7"/><rect x="5.6" y="5.3" width="1.9" height="5" fill="#4b5054"/><circle cx="6.55" cy="3.5" r="1.05" fill="#4b5054"/></svg>
<svg width="12" height="8" viewBox="0 0 12 8" style="position:absolute;left:1468px;top:232.2px"><path d="M1,1.2 L6,6 L11,1.2" fill="none" stroke="#a3a5a7" stroke-width="1.6"/></svg>
<div class="lbl it" style="left:1120.0px;top:248.2px">Velocità di stampa</div>
<div class="inp" style="top:249.4px"></div>
<div class="val" style="top:248.2px">40.0</div>
<div class="unit" style="top:248.2px">mm/s</div>
<div class="lbl it" style="left:1135.5px;top:271.9px">Velocità di riempimento</div>
<svg width="13" height="13" viewBox="0 0 13 13" style="position:absolute;left:1347.5px;top:277.4px"><circle cx="6.5" cy="6.5" r="6.2" fill="#9a9c9e"/><path d="M5.2,10.5 L6.2,4.2 Q6.6,2.6 8,3" fill="none" stroke="#3a3d40" stroke-width="1.3"/><line x1="4.3" y1="5.6" x2="7.4" y2="5.6" stroke="#3a3d40" stroke-width="1"/><path d="M7.2,8 L9.5,10.5 M9.5,8 L7.2,10.5" stroke="#3a3d40" stroke-width="0.9"/></svg>
<div class="inp" style="top:273.1px"></div>
<div class="val" style="top:271.9px">40.0</div>
<div class="unit" style="top:271.9px">mm/s</div>
<div class="lbl it" style="left:1135.5px;top:295.6px">Velocità di stampa della parete</div>
<svg width="13" height="13" viewBox="0 0 13 13" style="position:absolute;left:1347.5px;top:301.1px"><circle cx="6.5" cy="6.5" r="6.2" fill="#9a9c9e"/><path d="M5.2,10.5 L6.2,4.2 Q6.6,2.6 8,3" fill="none" stroke="#3a3d40" stroke-width="1.3"/><line x1="4.3" y1="5.6" x2="7.4" y2="5.6" stroke="#3a3d40" stroke-width="1"/><path d="M7.2,8 L9.5,10.5 M9.5,8 L7.2,10.5" stroke="#3a3d40" stroke-width="0.9"/></svg>
<div class="inp" style="top:296.8px"></div>
<div class="val" style="top:295.6px">40.0</div>
<div class="unit" style="top:295.6px">mm/s</div>
<div class="lbl it" style="left:1151.0px;top:319.3px">Velocità di stampa della parete esterna</div>
<svg width="13" height="13" viewBox="0 0 13 13" style="position:absolute;left:1347.5px;top:324.8px"><circle cx="6.5" cy="6.5" r="6.2" fill="#9a9c9e"/><path d="M5.2,10.5 L6.2,4.2 Q6.6,2.6 8,3" fill="none" stroke="#3a3d40" stroke-width="1.3"/><line x1="4.3" y1="5.6" x2="7.4" y2="5.6" stroke="#3a3d40" stroke-width="1"/><path d="M7.2,8 L9.5,10.5 M9.5,8 L7.2,10.5" stroke="#3a3d40" stroke-width="0.9"/></svg>
<div class="inp" style="top:320.5px"></div>
<div class="val" style="top:319.3px">20.0</div>
<div class="unit" style="top:319.3px">mm/s</div>
<div class="lbl" style="left:1151.0px;top:343.0px">Velocità di stampa della parete interna</div>
<div class="inp" style="top:344.2px"></div>
<div class="val" style="top:343.0px">40.0</div>
<div class="unit" style="top:343.0px">mm/s</div>
<div class="lbl it" style="left:1135.5px;top:366.7px">Velocità di stampa delle parti superiore/inferiore</div>
<svg width="13" height="13" viewBox="0 0 13 13" style="position:absolute;left:1347.5px;top:372.2px"><circle cx="6.5" cy="6.5" r="6.2" fill="#9a9c9e"/><path d="M5.2,10.5 L6.2,4.2 Q6.6,2.6 8,3" fill="none" stroke="#3a3d40" stroke-width="1.3"/><line x1="4.3" y1="5.6" x2="7.4" y2="5.6" stroke="#3a3d40" stroke-width="1"/><path d="M7.2,8 L9.5,10.5 M9.5,8 L7.2,10.5" stroke="#3a3d40" stroke-width="0.9"/></svg>
<div class="inp" style="top:367.9px"></div>
<div class="val" style="top:366.7px">40.0</div>
<div class="unit" style="top:366.7px">mm/s</div>
<div class="lbl it" style="left:1120.0px;top:390.4px">Velocità degli spostamenti</div>
<svg width="13" height="13" viewBox="0 0 13 13" style="position:absolute;left:1347.5px;top:395.9px"><circle cx="6.5" cy="6.5" r="6.2" fill="#9a9c9e"/><path d="M5.2,10.5 L6.2,4.2 Q6.6,2.6 8,3" fill="none" stroke="#3a3d40" stroke-width="1.3"/><line x1="4.3" y1="5.6" x2="7.4" y2="5.6" stroke="#3a3d40" stroke-width="1"/><path d="M7.2,8 L9.5,10.5 M9.5,8 L7.2,10.5" stroke="#3a3d40" stroke-width="0.9"/></svg>
<div class="inp" style="top:391.6px"></div>
<div class="val" style="top:390.4px">120.0</div>
<div class="unit" style="top:390.4px">mm/s</div>
<div class="lbl it" style="left:1120.0px;top:414.1px">Velocità di stampa dello strato iniziale</div>
<svg width="13" height="13" viewBox="0 0 13 13" style="position:absolute;left:1347.5px;top:419.6px"><circle cx="6.5" cy="6.5" r="6.2" fill="#9a9c9e"/><path d="M5.2,10.5 L6.2,4.2 Q6.6,2.6 8,3" fill="none" stroke="#3a3d40" stroke-width="1.3"/><line x1="4.3" y1="5.6" x2="7.4" y2="5.6" stroke="#3a3d40" stroke-width="1"/><path d="M7.2,8 L9.5,10.5 M9.5,8 L7.2,10.5" stroke="#3a3d40" stroke-width="0.9"/></svg>
<div class="inp" style="top:415.3px"></div>
<div class="val" style="top:414.1px">40.0</div>
<div class="unit" style="top:414.1px">mm/s</div>
<div class="lbl" style="left:1120.0px;top:437.8px">Velocità dello skirt/brim</div>
<svg width="13" height="13" viewBox="0 0 13 13" style="position:absolute;left:1347.5px;top:443.3px"><g fill="none" stroke="#9b9da0" stroke-width="2"><circle cx="3.8" cy="9.2" r="2.6"/><circle cx="9.2" cy="3.8" r="2.6"/></g><line x1="5.5" y1="7.5" x2="7.5" y2="5.5" stroke="#9b9da0" stroke-width="1.6"/></svg>
<div class="inp" style="top:439.0px"></div>
<div class="val" style="top:437.8px">40.0</div>
<div class="unit" style="top:437.8px">mm/s</div>
<div class="lbl" style="left:1120.0px;top:461.5px">Abilita controllo accelerazione</div>
<svg width="13" height="13" viewBox="0 0 13 13" style="position:absolute;left:1347.5px;top:467.0px"><g fill="none" stroke="#9b9da0" stroke-width="2"><circle cx="3.8" cy="9.2" r="2.6"/><circle cx="9.2" cy="3.8" r="2.6"/></g><line x1="5.5" y1="7.5" x2="7.5" y2="5.5" stroke="#9b9da0" stroke-width="1.6"/></svg>
<div class="chk" style="top:462.7px"></div>
<svg width="12" height="10" viewBox="0 0 12 10" style="position:absolute;left:1375px;top:468.5px"><path d="M1.2,5 L4.5,8.2 L10.8,1.5" fill="none" stroke="#e2e3e4" stroke-width="2.1"/></svg>
<div class="lbl it" style="left:1120.0px;top:485.2px">Abilita controllo jerk</div>
<svg width="13" height="13" viewBox="0 0 13 13" style="position:absolute;left:1347.5px;top:490.7px"><g fill="none" stroke="#9b9da0" stroke-width="2"><circle cx="3.8" cy="9.2" r="2.6"/><circle cx="9.2" cy="3.8" r="2.6"/></g><line x1="5.5" y1="7.5" x2="7.5" y2="5.5" stroke="#9b9da0" stroke-width="1.6"/></svg>
<div class="chk" style="top:486.4px"></div>
<svg width="12" height="10" viewBox="0 0 12 10" style="position:absolute;left:1375px;top:492.2px"><path d="M1.2,5 L4.5,8.2 L10.8,1.5" fill="none" stroke="#e2e3e4" stroke-width="2.1"/></svg>
<div class="cat" style="top:508.1px"></div>
<svg width="18" height="18" viewBox="0 0 18 18" style="position:absolute;left:1120px;top:511.1px"><path d="M8.5,1 L15.5,1 L13.5,5 Q12,6.5 12,7.5 L11,7.5 Q11,6.5 9.5,5 Z" fill="#dcddde"/><line x1="11.5" y1="7.5" x2="11.5" y2="10" stroke="#dcddde" stroke-width="1"/><g stroke="#d0d1d2" stroke-width="1.3"><line x1="4" y1="11" x2="14" y2="11"/><line x1="3" y1="13.5" x2="15" y2="13.5"/><line x1="2" y1="16" x2="16" y2="16"/></g></svg>
<div class="cattxt" style="top:508.6px;letter-spacing:-0.25px">Spostamenti</div>
<svg width="13" height="13" viewBox="0 0 13 13" style="position:absolute;left:1444.5px;top:513.6px"><circle cx="6.5" cy="6.5" r="6" fill="#a3a5a7"/><rect x="5.6" y="5.3" width="1.9" height="5" fill="#4b5054"/><circle cx="6.55" cy="3.5" r="1.05" fill="#4b5054"/></svg>
<svg width="12" height="8" viewBox="0 0 12 8" style="position:absolute;left:1468px;top:516.6px"><path d="M1,1.2 L6,6 L11,1.2" fill="none" stroke="#a3a5a7" stroke-width="1.6"/></svg>
<div class="lbl" style="left:1120.0px;top:532.6px">Abilitazione della retrazione</div>
<div class="chk" style="top:533.8px"></div>
<svg width="12" height="10" viewBox="0 0 12 10" style="position:absolute;left:1375px;top:539.6px"><path d="M1.2,5 L4.5,8.2 L10.8,1.5" fill="none" stroke="#e2e3e4" stroke-width="2.1"/></svg>
<div class="lbl it" style="left:1120.0px;top:556.3px">Distanza di retrazione</div>
<div class="inp" style="top:557.5px"></div>
<div class="val" style="top:556.3px">4</div>
<div class="unit" style="top:556.3px">mm</div>
<div class="lbl it" style="left:1120.0px;top:580.0px">Velocità di retrazione</div>
<div class="inp" style="top:581.2px"></div>
<div class="val" style="top:580.0px">40</div>
<div class="unit" style="top:580.0px">mm/s</div>
<div class="lbl it" style="left:1120.0px;top:603.7px">Z Hop durante la retrazione</div>
<div class="chk" style="top:604.9px"></div>
<svg width="12" height="10" viewBox="0 0 12 10" style="position:absolute;left:1375px;top:610.7px"><path d="M1.2,5 L4.5,8.2 L10.8,1.5" fill="none" stroke="#e2e3e4" stroke-width="2.1"/></svg>
<div class="lbl it" style="left:1120.0px;top:627.4px">Altezza Z Hop</div>
<div class="inp" style="top:628.6px"></div>
<div class="val" style="top:627.4px">0.4</div>
<div class="unit" style="top:627.4px">mm</div>
<div class="cat" style="top:650.3px"></div>
<svg width="18" height="18" viewBox="0 0 18 18" style="position:absolute;left:1120px;top:653.3px"><g fill="#cfd0d1" transform="translate(8.8 9.4)"><ellipse cx="0" cy="-4.7" rx="1.3" ry="3.0" transform="rotate(0) rotate(-35 0 -4.7)"/><ellipse cx="0" cy="-4.7" rx="1.3" ry="3.0" transform="rotate(40) rotate(-35 0 -4.7)"/><ellipse cx="0" cy="-4.7" rx="1.3" ry="3.0" transform="rotate(80) rotate(-35 0 -4.7)"/><ellipse cx="0" cy="-4.7" rx="1.3" ry="3.0" transform="rotate(120) rotate(-35 0 -4.7)"/><ellipse cx="0" cy="-4.7" rx="1.3" ry="3.0" transform="rotate(160) rotate(-35 0 -4.7)"/><ellipse cx="0" cy="-4.7" rx="1.3" ry="3.0" transform="rotate(200) rotate(-35 0 -4.7)"/><ellipse cx="0" cy="-4.7" rx="1.3" ry="3.0" transform="rotate(240) rotate(-35 0 -4.7)"/><ellipse cx="0" cy="-4.7" rx="1.3" ry="3.0" transform="rotate(280) rotate(-35 0 -4.7)"/><ellipse cx="0" cy="-4.7" rx="1.3" ry="3.0" transform="rotate(320) rotate(-35 0 -4.7)"/></g></svg>
<div class="cattxt" style="top:650.8px;letter-spacing:0px">Raffreddamento</div>
<svg width="12" height="8" viewBox="0 0 12 8" style="position:absolute;left:1468px;top:658.8px"><path d="M1,1.2 L6,6 L11,1.2" fill="none" stroke="#a3a5a7" stroke-width="1.6"/></svg>
<div class="lbl it" style="left:1120.0px;top:674.8px">Abilitazione raffreddamento stampa</div>
<div class="chk" style="top:676.0px"></div>
<div class="cat" style="top:697.7px"></div>
<svg width="18" height="18" viewBox="0 0 18 18" style="position:absolute;left:1120px;top:700.7px"><path d="M6,2.5 L14,2.5 L13,8 L15.5,15.5 L4,15.5" fill="none" stroke="#b8babc" stroke-width="1.1"/><path d="M3.5,15.8 L3.5,8.5 L6.5,8.5 L6.5,11 L9,11 L9,13 L12,13 L12,15.8 Z" fill="#dcddde"/></svg>
<div class="cattxt" style="top:698.2px;letter-spacing:-0.37px">Supporto</div>
<svg width="12" height="8" viewBox="0 0 12 8" style="position:absolute;left:1468px;top:706.2px"><path d="M1,1.2 L6,6 L11,1.2" fill="none" stroke="#a3a5a7" stroke-width="1.6"/></svg>
<div class="lbl it" style="left:1120.0px;top:722.2px">Generazione supporto</div>
<svg width="13" height="13" viewBox="0 0 13 13" style="position:absolute;left:1347.5px;top:727.7px"><g fill="none" stroke="#9b9da0" stroke-width="2"><circle cx="3.8" cy="9.2" r="2.6"/><circle cx="9.2" cy="3.8" r="2.6"/></g><line x1="5.5" y1="7.5" x2="7.5" y2="5.5" stroke="#9b9da0" stroke-width="1.6"/></svg>
<div class="chk" style="top:723.4px"></div>
<div class="cat" style="top:745.1px"></div>
<svg width="18" height="18" viewBox="0 0 18 18" style="position:absolute;left:1120px;top:748.1px"><g stroke="#c8c9ca" stroke-width="1.1" fill="none"><line x1="3" y1="8.7" x2="15" y2="8.7"/><line x1="3" y1="10.3" x2="15" y2="10.3"/><line x1="9" y1="3" x2="9" y2="7"/><line x1="9" y1="12" x2="9" y2="16"/><path d="M7.3,5.3 L9,7 L10.7,5.3"/><path d="M7.3,13.7 L9,12 L10.7,13.7"/></g></svg>
<div class="cattxt" style="top:745.6px;letter-spacing:-0.25px">Adesione piano di stampa</div>
<svg width="12" height="8" viewBox="0 0 12 8" style="position:absolute;left:1468px;top:753.6px"><path d="M1,1.2 L6,6 L11,1.2" fill="none" stroke="#a3a5a7" stroke-width="1.6"/></svg>
<div class="lbl" style="left:1120.0px;top:769.6px">Tipo di adesione piano di stampa</div>
<svg width="13" height="13" viewBox="0 0 13 13" style="position:absolute;left:1347.5px;top:775.1px"><g fill="none" stroke="#9b9da0" stroke-width="2"><circle cx="3.8" cy="9.2" r="2.6"/><circle cx="9.2" cy="3.8" r="2.6"/></g><line x1="5.5" y1="7.5" x2="7.5" y2="5.5" stroke="#9b9da0" stroke-width="1.6"/></svg>
<div class="inp" style="top:770.8px"></div>
<div class="val" style="top:769.6px">Brim</div>
<svg width="12" height="8" viewBox="0 0 12 8" style="position:absolute;left:1467.5px;top:778.3px"><path d="M1,1.2 L6,6 L11,1.2" fill="none" stroke="#c8c9ca" stroke-width="1.6"/></svg>
</div>
<!-- scrollbar -->
<div class="abs" style="left:1497px;top:387.5px;width:3px;height:308.5px;background:#84888c;border-radius:2px 0 0 2px"></div>
<!-- bottom -->
<div class="abs" style="left:1097px;top:791px;width:403px;height:39px;background:#212528"></div>
<div class="abs" style="left:1097px;top:791px;width:403px;height:1px;background:#33373a"></div>
<div class="abs" style="left:1097px;top:800px;width:403px;height:1px;background:#3a3e42"></div>
<div class="abs" style="left:1097px;top:801px;width:403px;height:29px;background:#272b2f"></div>
<div class="abs" style="left:1123.5px;top:814.7px;width:369.5px;height:30px;background:#246ee8;border-radius:2px"></div>
<div class="abs" style="left:1123.5px;top:819px;width:369.5px;text-align:center;height:24px;line-height:24px;font-size:11.5px;color:#e6effc;white-space:nowrap">Sezionamento</div>

</div></body></html>
